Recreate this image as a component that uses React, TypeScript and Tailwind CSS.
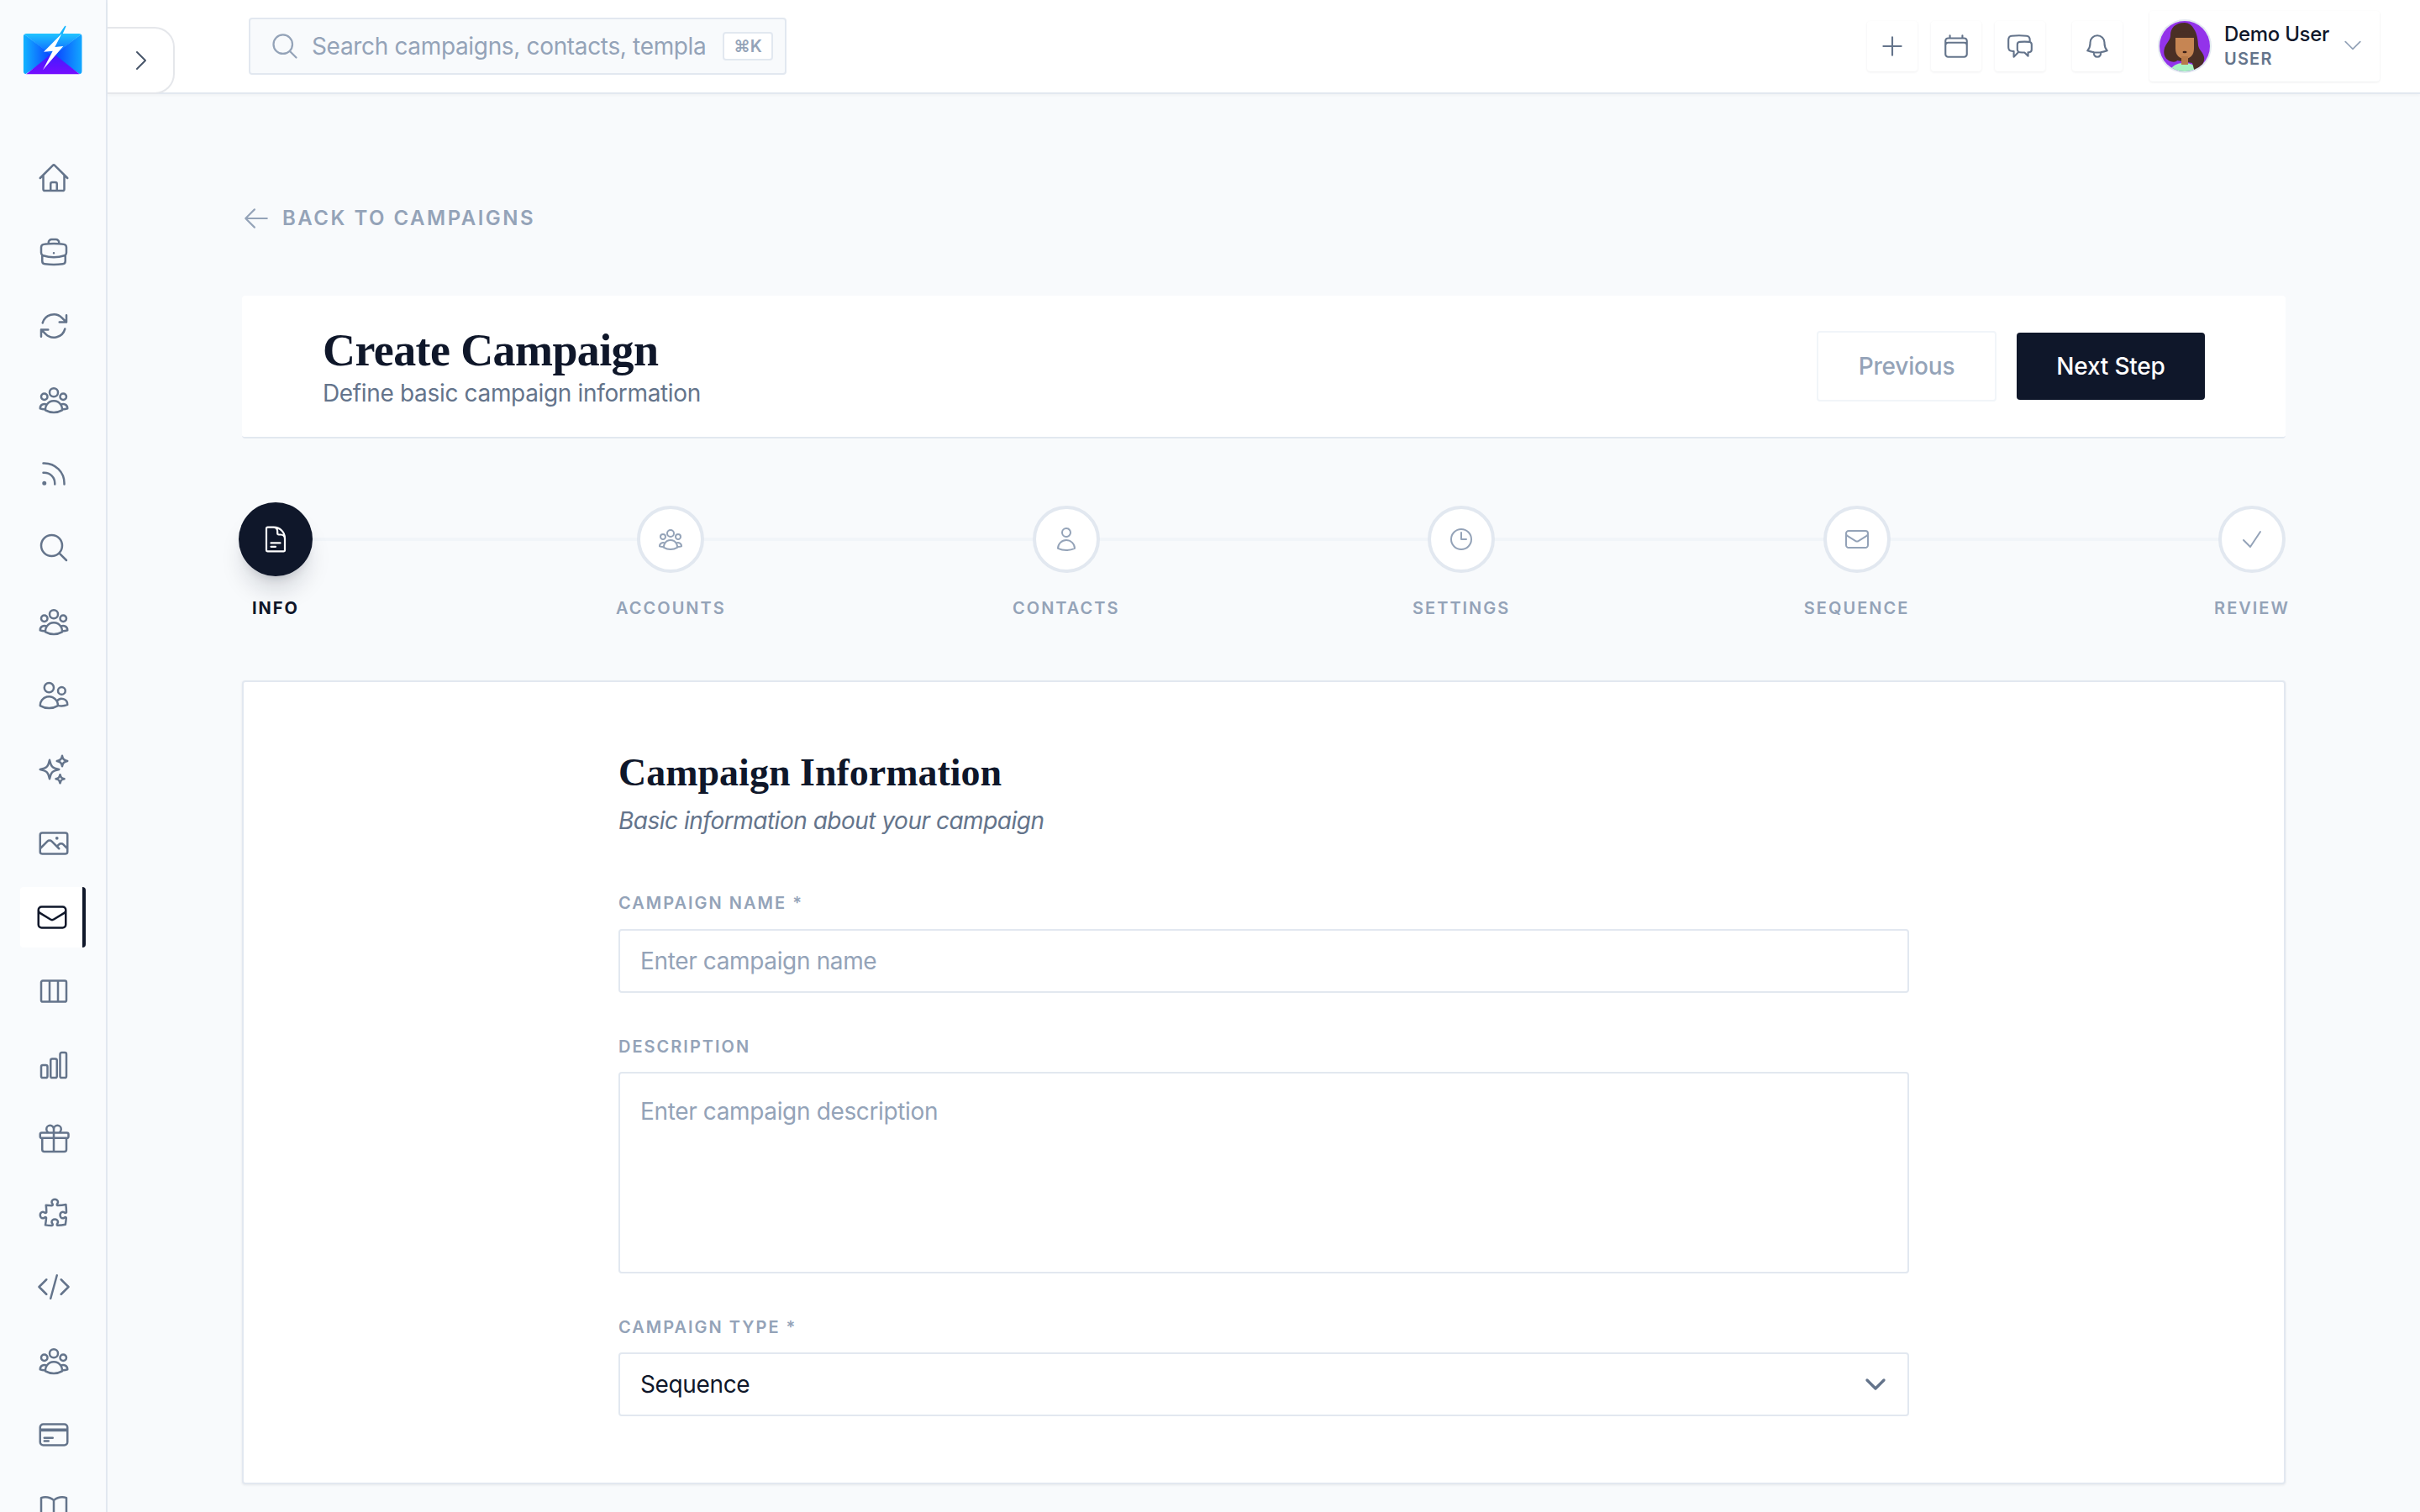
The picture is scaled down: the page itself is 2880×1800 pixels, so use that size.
import {
  HiOutlineArrowLeft,
  HiOutlineArrowPath,
  HiOutlineBell,
  HiOutlineBookOpen,
  HiOutlineBriefcase,
  HiOutlineCalendar,
  HiOutlineChartBar,
  HiOutlineChatBubbleLeftRight,
  HiOutlineCheck,
  HiOutlineChevronDown,
  HiOutlineChevronRight,
  HiOutlineClock,
  HiOutlineCodeBracket,
  HiOutlineCreditCard,
  HiOutlineDocumentText,
  HiOutlineEnvelope,
  HiOutlineGift,
  HiOutlineHome,
  HiOutlineMagnifyingGlass,
  HiOutlinePhoto,
  HiOutlinePlus,
  HiOutlinePuzzlePiece,
  HiOutlineRss,
  HiOutlineSparkles,
  HiOutlineUser,
  HiOutlineUserGroup,
  HiOutlineUsers,
  HiOutlineViewColumns,
} from "react-icons/hi2";

const sans = "font-['Inter',sans-serif]";
const serif = "font-['Liberation_Serif',serif]";

const navItems = [
  { icon: HiOutlineHome },
  { icon: HiOutlineBriefcase },
  { icon: HiOutlineArrowPath },
  { icon: HiOutlineUserGroup },
  { icon: HiOutlineRss },
  { icon: HiOutlineMagnifyingGlass },
  { icon: HiOutlineUserGroup },
  { icon: HiOutlineUsers },
  { icon: HiOutlineSparkles },
  { icon: HiOutlinePhoto },
  { icon: HiOutlineEnvelope, active: true },
  { icon: HiOutlineViewColumns },
  { icon: HiOutlineChartBar },
  { icon: HiOutlineGift },
  { icon: HiOutlinePuzzlePiece },
  { icon: HiOutlineCodeBracket },
  { icon: HiOutlineUserGroup },
  { icon: HiOutlineCreditCard },
  { icon: HiOutlineBookOpen },
];

const steps = [
  { label: "INFO", icon: HiOutlineDocumentText, active: true },
  { label: "ACCOUNTS", icon: HiOutlineUserGroup },
  { label: "CONTACTS", icon: HiOutlineUser },
  { label: "SETTINGS", icon: HiOutlineClock },
  { label: "SEQUENCE", icon: HiOutlineEnvelope },
  { label: "REVIEW", icon: HiOutlineCheck },
];

const Logo = () => (
  <svg viewBox="0 0 72 60" className="w-[72px] h-[60px]">
    <defs>
      <clipPath id="logoClip">
        <rect x="0.7" y="10" width="70" height="48.3" rx="4" />
      </clipPath>
      <linearGradient id="logoLeft" x1="0" y1="0" x2="1" y2="0">
        <stop offset="0" stopColor="#12b4ff" />
        <stop offset="1" stopColor="#0a3cff" />
      </linearGradient>
      <linearGradient id="logoRight" x1="1" y1="0" x2="0" y2="0">
        <stop offset="0" stopColor="#12a8ff" />
        <stop offset="1" stopColor="#0a3cff" />
      </linearGradient>
      <linearGradient id="logoTop" x1="0" y1="0" x2="0" y2="1">
        <stop offset="0" stopColor="#20c4ff" />
        <stop offset="1" stopColor="#0a58ff" />
      </linearGradient>
      <linearGradient id="logoBottom" x1="0" y1="0" x2="0" y2="1">
        <stop offset="0" stopColor="#3c1cff" />
        <stop offset="1" stopColor="#7a0cff" />
      </linearGradient>
    </defs>
    <g clipPath="url(#logoClip)">
      <path d="M0.7 10 35.7 36 0.7 60Z" fill="url(#logoLeft)" />
      <path d="M70.7 10 35.7 36 70.7 60Z" fill="url(#logoRight)" />
      <path d="M0.7 10H70.7L35.7 37Z" fill="url(#logoTop)" />
      <path d="M2 60 35.7 33 70 60Z" fill="url(#logoBottom)" />
    </g>
    <path d="M50.7 1.5 41 16l5-4Z" fill="#12b4ff" stroke="#12b4ff" strokeWidth="1.5" strokeLinejoin="round" />
    <path d="M46.5 10 25 31.7 35.7 30.7 24 53.3 48.3 25 38.3 26Z" fill="#ffffff" />
  </svg>
);

const Avatar = () => (
  <svg viewBox="0 0 64 64" className="w-16 h-16 shrink-0">
    <defs>
      <clipPath id="avatarClip">
        <circle cx="32" cy="32" r="30" />
      </clipPath>
    </defs>
    <circle cx="32" cy="32" r="32" fill="#e2e8f0" />
    <circle cx="32" cy="32" r="30" fill="#9333ea" />
    <g clipPath="url(#avatarClip)">
      <path d="M14 64c1-8 8-12 17-12s18 4 20 12Z" fill="#a7f3c0" />
      <path d="M32 4c-12 0-17 7-17 15 0 6-5 9-7 15-2 7 0 13 7 16 3 1 7 1 8-1l18 3 3 11c5 0 8-2 8-7 1-3 4-6 3-11-1-6-6-8-7-14 0-15-7-27-16-27Z" fill="#4a2f25" />
      <path d="M21 21h22v14c0 8-5 12-11 12s-11-4-11-12Z" fill="#c68553" />
      <rect x="28" y="44" width="8" height="10" fill="#b97a49" />
      <path d="M19 22c2-5 7-8 13-8s11 3 13 8Z" fill="#4a2f25" />
      <ellipse cx="32" cy="39" rx="2.5" ry="1.3" fill="#3b2018" />
    </g>
  </svg>
);

function Sidebar() {
  return (
    <aside className="w-[128px] h-full shrink-0 bg-[#f9fbfd] border-r-2 border-[#e2e8f0] flex flex-col overflow-hidden">
      <div className="h-[176px] shrink-0 pl-[27px] pt-[30px]">
        <Logo />
      </div>
      <nav className="flex flex-col gap-4 px-6">
        {navItems.map((item, i) => {
          const Icon = item.icon;
          return (
            <div
              key={i}
              className={
                item.active
                  ? "h-[72px] shrink-0 flex items-center justify-center pl-[2px] rounded-[4px] bg-white border-r-4 border-[#0f172a] text-[#0f172a]"
                  : "h-[72px] shrink-0 flex items-center justify-center pl-[2px] text-[#64748b]"
              }
            >
              <Icon className="w-10 h-10" />
            </div>
          );
        })}
      </nav>
    </aside>
  );
}

function TopButton({ icon: Icon }: { icon: typeof HiOutlinePlus }) {
  return (
    <button className="w-[60px] h-[60px] flex items-center justify-center rounded-[4px] bg-white text-[#64748b] shadow-[0_1px_3px_rgba(15,23,42,0.07)]">
      <Icon className="w-[34px] h-[34px]" />
    </button>
  );
}

function Topbar() {
  return (
    <header className="relative z-10 h-[112px] shrink-0 bg-white border-b-2 border-[#e2e8f0] shadow-[0_2px_4px_rgba(15,23,42,0.03)] flex items-center pl-[168px] pr-[48px]">
      <button className="absolute left-0 top-[32px] w-[80px] h-[80px] pl-[2px] bg-white border-2 border-l-0 border-[#e5e7eb] rounded-r-[24px] flex items-center justify-center text-[#475569]">
        <HiOutlineChevronRight className="w-8 h-8" />
      </button>
      <div className="w-[640px] h-[68px] flex items-center bg-[#f8fafc] border-2 border-[#e2e8f0] rounded-[4px] pl-[23px] pr-[14px]">
        <HiOutlineMagnifyingGlass className="w-9 h-9 text-[#94a3b8] shrink-0" />
        <input
          className="ml-[14px] min-w-0 flex-1 bg-transparent text-[28px] tracking-[-0.34px] placeholder:text-[#94a3b8] outline-none"
          placeholder="Search campaigns, contacts, templates..."
        />
        <span className="ml-[20px] w-[60px] h-[34px] shrink-0 flex items-center justify-center bg-white border-2 border-[#e2e8f0] rounded-[4px] text-[20px] font-semibold text-[#94a3b8]">
          ⌘K
        </span>
      </div>
      <div className="ml-auto flex items-center">
        <div className="flex items-center gap-4">
          <TopButton icon={HiOutlinePlus} />
          <TopButton icon={HiOutlineCalendar} />
          <TopButton icon={HiOutlineChatBubbleLeftRight} />
        </div>
        <div className="ml-8">
          <TopButton icon={HiOutlineBell} />
        </div>
        <div className="ml-8 w-[274px] h-[84px] flex items-center pl-[10px] rounded-[4px] bg-white shadow-[0_1px_3px_rgba(15,23,42,0.08)]">
          <Avatar />
          <div className="ml-[15px] flex flex-col whitespace-nowrap">
            <span className="text-[24px] leading-[30px] font-medium tracking-[-0.3px] text-[#0f172a]">Demo User</span>
            <span className="text-[20px] leading-[28px] font-semibold text-[#64748b] tracking-[1.2px]">USER</span>
          </div>
          <HiOutlineChevronDown className="ml-auto mr-[18px] mt-[-2px] w-7 h-7 text-[#94a3b8]" />
        </div>
      </div>
    </header>
  );
}

function Stepper() {
  return (
    <div className="relative mt-[80px] flex justify-between">
      <div className="absolute left-0 right-0 top-[38px] h-1 bg-[#f1f5f9]" />
      {steps.map((step) => {
        const Icon = step.icon;
        return (
          <div key={step.label} className="relative w-[80px] flex flex-col items-center">
            <div
              className={
                step.active
                  ? "w-[80px] h-[80px] rounded-full bg-[#0f172a] text-white flex items-center justify-center scale-110 shadow-[0_20px_25px_-5px_rgba(15,23,42,0.15),0_8px_10px_-6px_rgba(15,23,42,0.15)]"
                  : "w-[80px] h-[80px] rounded-full bg-white border-4 border-[#e2e8f0] text-[#94a3b8] flex items-center justify-center"
              }
            >
              <Icon className="w-8 h-8" />
            </div>
            <span
              className={
                step.active
                  ? "mt-[28px] text-[20px] leading-[28px] font-bold tracking-[2px] whitespace-nowrap text-[#0f172a]"
                  : "mt-[28px] text-[20px] leading-[28px] font-semibold tracking-[2px] whitespace-nowrap text-[#94a3b8]"
              }
            >
              {step.label}
            </span>
          </div>
        );
      })}
    </div>
  );
}

const labelCls = "block text-[20px] leading-[28px] font-semibold tracking-[2px] text-[#94a3b8]";
const fieldCls = "w-full bg-white border-2 border-[#e2e8f0] rounded-[4px] px-6 text-[28px] tracking-[-0.36px] text-[#0f172a] placeholder:text-[#94a3b8] outline-none";

export default function App() {
  return (
    <div className={`${sans} flex w-full h-[1800px] overflow-hidden bg-[#f8fafc]`}>
      <Sidebar />
      <div className="flex-1 min-w-0 flex flex-col">
        <Topbar />
        <main className="flex-1 px-[160px] pt-[134px]">
          <a className="flex items-center text-[#94a3b8] h-[28px]">
            <HiOutlineArrowLeft className="w-[34px] h-[34px] shrink-0" />
            <span className="ml-[14px] text-[24px] font-semibold tracking-[2.5px]">BACK TO CAMPAIGNS</span>
          </a>

          <section className="mt-[78px] h-[170px] flex items-center justify-between bg-white border-b-2 border-[#e2e8f0] rounded-[4px] pl-[96px] pr-[96px]">
            <div>
              <h1 className={`${serif} text-[54px] leading-[60px] font-bold tracking-[-0.6px] text-[#0f172a]`}>Create Campaign</h1>
              <p className="mt-[3px] text-[28px] leading-[36px] tracking-[-0.34px] text-[#64748b]">Define basic campaign information</p>
            </div>
            <div className="flex items-center gap-6">
              <button className="w-[214px] h-[84px] bg-white border-2 border-[#f1f5f9] rounded-[4px] text-[28px] font-medium tracking-[-0.2px] text-[#94a3b8]">
                Previous
              </button>
              <button className="w-[224px] h-[80px] bg-[#0f172a] rounded-[4px] text-[28px] font-medium tracking-[-0.2px] text-white">
                Next Step
              </button>
            </div>
          </section>

          <Stepper />

          <section className="mt-[72px] h-[957px] bg-white border-2 border-[#e2e8f0] rounded-[4px] shadow-[0_1px_3px_rgba(15,23,42,0.08)]">
            <div className="w-[1536px] mx-auto pt-[80px]">
              <h2 className={`${serif} text-[46px] leading-[56px] font-bold text-[#0f172a]`}>Campaign Information</h2>
              <p className="mt-[9px] text-[28px] leading-[40px] italic tracking-[-0.5px] text-[#64748b]">Basic information about your campaign</p>

              <label className={`${labelCls} mt-[64px]`}>CAMPAIGN NAME *</label>
              <input className={`${fieldCls} mt-[17px] h-[76px]`} placeholder="Enter campaign name" />

              <label className={`${labelCls} mt-[50px]`}>DESCRIPTION</label>
              <textarea className={`${fieldCls} mt-[16px] h-[240px] py-[24px] resize-none block`} placeholder="Enter campaign description" />

              <label className={`${labelCls} mt-[50px]`}>CAMPAIGN TYPE *</label>
              <div className={`${fieldCls} mt-[16px] h-[76px] flex items-center justify-between`}>
                <span>Sequence</span>
                <HiOutlineChevronDown strokeWidth={2.5} className="w-8 h-8 text-[#64748b] mr-[-2px]" />
              </div>
            </div>
          </section>
        </main>
      </div>
    </div>
  );
}
